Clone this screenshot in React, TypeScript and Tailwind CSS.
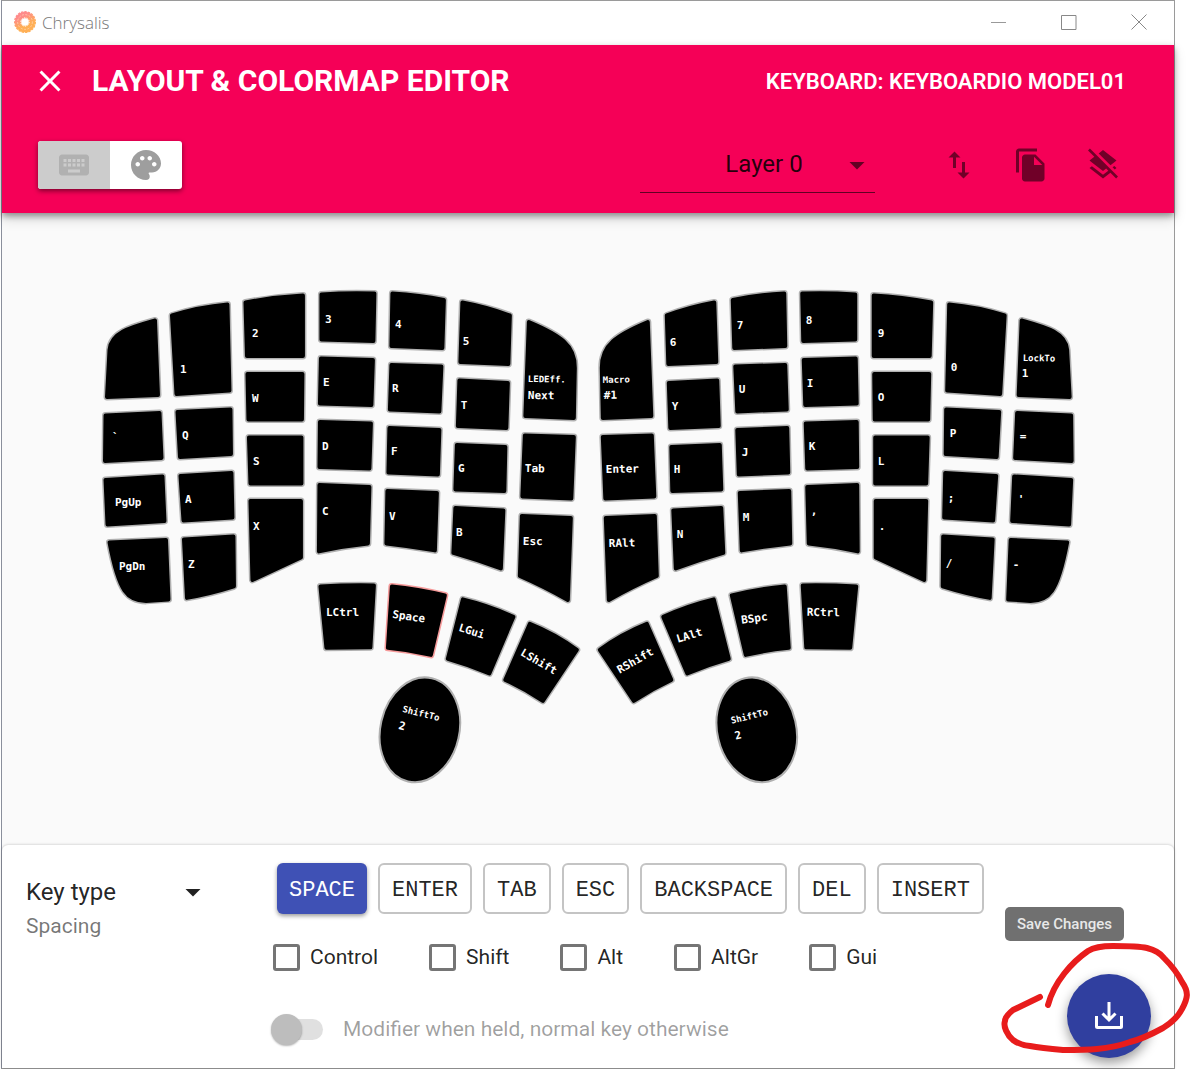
import React from "react";
import {
  MdArrowDropDown,
  MdClose,
  MdFileCopy,
  MdImportExport,
  MdKeyboard,
  MdLayersClear,
  MdPalette,
} from "react-icons/md";

type Legend = { text: string; x: number; y: number; turn?: number; small?: boolean };

/* Keycap outlines of the left half; the right half is their mirror image. */
const CAPS: string[] = [
  "M155 320.5L158 395L107 397L109.5 350C111 332 132 327 155 320.5Z",
  "M172 315.5Q199 307 227.5 304.5L229.5 390.5L176.5 394Z",
  "M245.5 302.5Q275 297 303 295.5V356H247Z",
  "M247.5 374H302.5L302 419.5H248.5Z",
  "M249 437.5H301.5V483.5H250.5Z",
  "M250.5 501H301V557.5L252.5 580Z",
  "M105.5 415.5L159.5 413L161.5 458L105 461Z",
  "M105.5 480L162.5 476.5L164.5 521L107.5 524.5Z",
  "M109.5 542.5L166 540L168.5 599.5L146 601C128 601 119 593 109.5 542.5Z",
  "M177.5 412L230.5 409.5L231 454L180 457Z",
  "M180.5 476L231.5 473L232.5 517.5L183.5 520.5Z",
  "M184 539.5L233.5 536.5L234 586.5Q210 594 187 598Z",
  "M321.5 294.5Q348 292.5 374.5 293.5L373.5 341L321.5 339.5Z",
  "M321 358.5L373 360L371.5 405L320 403.5Z",
  "M320 422L371 423.5L369.5 468.5L319.5 467Z",
  "M319.5 485L369.5 487L368 543.5Q343 546 319 551.5Z",
  "M392.5 293.5Q420 295 444 300L442.5 348L391.5 346Z",
  "M391.5 365L441.5 366.5L439.5 411.5L390 409.5Z",
  "M389.5 428L439.5 430L438 474.5L388.5 472.5Z",
  "M387.5 491L437 493L435 550.5Q410 546 386.5 543.5Z",
  "M462.5 302.5Q487 307 510 315.5L508.5 364L460.5 362Z",
  "M459.5 380.5L508 383L506.5 428L458 426Z",
  "M457 445L505.5 447L504.5 491L455.5 489.5Z",
  "M455.5 508L503.5 510.5L501 568.5Q478 560 453.5 553Z",
  "M529 322C560 335 575.5 345 575 368L574 418L525.5 416Z",
  "M525 435.5L574 437L571.5 498.5L522.5 496.5Z",
  "M522 516L571 518L568 600Q543 586 520 576Z",
  "M320.5 586.5Q348 585 374 585.5L370.5 647.5L326.5 648Z",
  "M463 599.5Q490 606 513.5 617L489.5 673.5Q469 665 448 659Z",
  "M530 624Q555 634 577 650L543 701Q525 689 505.5 680Z",
];

const THUMB_CAP = "M392 586.5Q418 589 445 595.5L431 655Q410 650 388 648Z";

const LEGENDS: Legend[] = [
  { text: "1", x: 180, y: 373 },
  { text: "2", x: 252, y: 337 },
  { text: "W", x: 252, y: 402 },
  { text: "S", x: 253, y: 465 },
  { text: "X", x: 253, y: 530 },
  { text: "`", x: 112, y: 441 },
  { text: "Q", x: 182, y: 439 },
  { text: "A", x: 185, y: 503 },
  { text: "Z", x: 188, y: 568 },
  { text: "PgUp", x: 115, y: 506 },
  { text: "PgDn", x: 119, y: 570 },
  { text: "3", x: 325, y: 323 },
  { text: "4", x: 395, y: 328 },
  { text: "5", x: 463, y: 345 },
  { text: "E", x: 323, y: 386 },
  { text: "R", x: 392, y: 392 },
  { text: "T", x: 461, y: 409 },
  { text: "D", x: 322, y: 450 },
  { text: "F", x: 391, y: 455 },
  { text: "G", x: 458, y: 472 },
  { text: "C", x: 322, y: 515 },
  { text: "V", x: 389, y: 520 },
  { text: "B", x: 456, y: 536 },
  { text: "LEDEff.", x: 528, y: 382, turn: 1, small: true },
  { text: "Next", x: 528, y: 399, turn: 1 },
  { text: "Tab", x: 525, y: 472, turn: 1 },
  { text: "Esc", x: 523, y: 545, turn: 1 },
  { text: "Macro", x: 603, y: 383, turn: -1, small: true },
  { text: "#1", x: 604, y: 399, turn: -1 },
  { text: "Enter", x: 606, y: 473, turn: -1 },
  { text: "RAlt", x: 609, y: 547, turn: -1 },
  { text: "6", x: 670, y: 346 },
  { text: "Y", x: 672, y: 410 },
  { text: "H", x: 674, y: 473 },
  { text: "N", x: 677, y: 538 },
  { text: "7", x: 737, y: 329 },
  { text: "U", x: 739, y: 393 },
  { text: "J", x: 742, y: 456 },
  { text: "M", x: 743, y: 521 },
  { text: "8", x: 806, y: 324 },
  { text: "I", x: 807, y: 387 },
  { text: "K", x: 809, y: 450 },
  { text: ",", x: 811, y: 515 },
  { text: "9", x: 878, y: 337 },
  { text: "O", x: 878, y: 401 },
  { text: "L", x: 878, y: 465 },
  { text: ".", x: 879, y: 530 },
  { text: "0", x: 951, y: 371 },
  { text: "P", x: 950, y: 437 },
  { text: ";", x: 948, y: 502 },
  { text: "/", x: 946, y: 567 },
  { text: "LockTo", x: 1023, y: 361, turn: 1, small: true },
  { text: "1", x: 1022, y: 377 },
  { text: "=", x: 1020, y: 440 },
  { text: "'", x: 1018, y: 503 },
  { text: "-", x: 1013, y: 568 },
  { text: "LCtrl", x: 326, y: 616 },
  { text: "Space", x: 392, y: 618, turn: 8 },
  { text: "LGui", x: 458, y: 631, turn: 17 },
  { text: "LShift", x: 520, y: 655, turn: 30 },
  { text: "ShiftTo", x: 402, y: 712, turn: 14, small: true },
  { text: "2", x: 398, y: 729, turn: 14 },
  { text: "RShift", x: 620, y: 674, turn: -30 },
  { text: "LAlt", x: 678, y: 643, turn: -17 },
  { text: "BSpc", x: 742, y: 624, turn: -8 },
  { text: "RCtrl", x: 807, y: 616, turn: 1 },
  { text: "ShiftTo", x: 732, y: 724, turn: -14, small: true },
  { text: "2", x: 736, y: 740, turn: -14 },
];

function Cap({ d, selected = false }: { d: string; selected?: boolean }) {
  return (
    <g strokeLinejoin="round">
      <path d={d} fill="none" stroke={selected ? "#f59a9a" : "#b0b0b0"} strokeWidth={7} />
      <path d={d} fill="#000" stroke="#000" strokeWidth={4} />
    </g>
  );
}

function Half({ selected = false }: { selected?: boolean }) {
  return (
    <>
      {CAPS.map((d) => (
        <Cap key={d} d={d} />
      ))}
      <Cap d={THUMB_CAP} selected={selected} />
      <ellipse
        cx={420}
        cy={730}
        rx={39.5}
        ry={53}
        transform="rotate(13 420 730)"
        fill="#000"
        stroke="#b0b0b0"
        strokeWidth={2}
      />
    </>
  );
}

function Keyboard() {
  return (
    <svg viewBox="100 286 977 500" className="w-10/12" role="img" aria-label="Keyboard layout">
      <Half selected />
      <g transform="translate(1177 0) scale(-1 1)">
        <Half />
      </g>
      <g className="fill-white font-['DejaVu_Sans_Mono',monospace] font-bold">
        {LEGENDS.map((l, i) => (
          <text
            key={i}
            x={l.x}
            y={l.y}
            className={l.small ? "text-[9px]" : "text-[11px]"}
            transform={l.turn ? `rotate(${l.turn} ${l.x} ${l.y})` : undefined}
          >
            {l.text}
          </text>
        ))}
      </g>
    </svg>
  );
}

function Logo() {
  return (
    <svg viewBox="0 0 24 24" className="size-6" aria-hidden="true">
      <defs>
        <linearGradient id="ring" x1="0" y1="0" x2="0.5" y2="1">
          <stop offset="0.2" stopColor="#ff8a8a" />
          <stop offset="0.8" stopColor="#ffb056" />
        </linearGradient>
      </defs>
      <circle cx="12" cy="12" r="7" fill="none" stroke="url(#ring)" strokeWidth="6.5" />
      <circle cx="12" cy="12" r="10.3" fill="none" stroke="url(#ring)" strokeWidth="1.4" strokeDasharray="2.4 1" />
      <circle cx="12" cy="12" r="7.4" fill="none" stroke="#ffd0b0" strokeWidth="0.8" strokeDasharray="2 1.5" />
      <circle cx="12" cy="12" r="4.2" fill="none" stroke="#fff" strokeWidth="1" strokeDasharray="1.4 1.2" />
    </svg>
  );
}

function TitleBar() {
  return (
    <div className="flex h-11 items-center justify-between bg-white pb-0.5 pl-[11px]">
      <div className="flex items-center gap-[5px]">
        <Logo />
        <span className="pt-0.5 font-['Open_Sans','Noto_Sans',sans-serif] text-[17px] leading-6 font-light text-[#777]">
          Chrysalis
        </span>
      </div>
      <div className="flex">
        <button aria-label="Minimize" className="flex h-10 w-[70px] items-center justify-center">
          <svg viewBox="0 0 16 16" className="size-4" stroke="#999" fill="none">
            <path d="M0 8.500H15" />
          </svg>
        </button>
        <button aria-label="Maximize" className="flex h-10 w-[70px] items-center justify-center">
          <svg viewBox="0 0 16 16" className="size-4" stroke="#888" fill="none">
            <path d="M.5 1.500H15V15.500H.5Z" />
          </svg>
        </button>
        <button aria-label="Close window" className="flex h-10 w-[70px] items-center justify-center">
          <svg viewBox="0 0 16 16" className="size-4" stroke="#888" fill="none">
            <path d="M.5 .5L15.500 15.500M15.500 .5L.5 15.500" />
          </svg>
        </button>
      </div>
    </div>
  );
}

function Header() {
  return (
    <header className="relative bg-[#f50057] shadow-[0_3px_6px_rgba(0,0,0,0.35),0_6px_12px_rgba(0,0,0,0.15)]">
      <div className="flex h-18 items-center justify-between pr-12 pl-[30px] text-white">
        <div className="flex items-center gap-6">
          <button aria-label="Close editor">
            <MdClose className="size-9" />
          </button>
          <h1 className="text-[30px] leading-9 font-bold">LAYOUT &amp; COLORMAP EDITOR</h1>
        </div>
        <span className="text-[22px] font-semibold">KEYBOARD: KEYBOARDIO MODEL01</span>
      </div>
      <div className="flex h-24 items-center justify-between pr-[35px] pl-9">
        <div className="flex overflow-hidden rounded-[3px] bg-white shadow-[0_2px_5px_rgba(0,0,0,0.5)]">
          <button aria-label="Edit layout" className="flex h-12 w-18 items-center justify-center bg-[#cccccc] text-[#b1b1b1]">
            <MdKeyboard className="size-9" />
          </button>
          <button aria-label="Edit colormap" className="flex h-12 w-18 items-center justify-center text-[#9e9e9e]">
            <MdPalette className="size-9" />
          </button>
        </div>
        <div className="flex items-center">
          <div className="relative mr-12 w-[235px]">
            <select
              aria-label="Layer"
              className="h-14 w-full appearance-none border-b border-black/60 pb-0.5 pl-[13px] text-center text-2xl text-black/87 [text-align-last:center]"
            >
              <option>Layer 0</option>
            </select>
            <MdArrowDropDown className="pointer-events-none absolute top-2.5 right-0 size-9 text-black/60" />
          </div>
          <button aria-label="Import or export" className="flex size-18 items-center justify-center text-black/54">
            <MdImportExport className="size-9" />
          </button>
          <button aria-label="Copy layer" className="flex size-18 items-center justify-center text-black/54">
            <MdFileCopy className="size-9" />
          </button>
          <button aria-label="Clear layer" className="flex size-18 items-center justify-center text-black/54">
            <MdLayersClear className="size-9" />
          </button>
        </div>
      </div>
    </header>
  );
}

const KEYS = ["ENTER", "TAB", "ESC", "BACKSPACE", "DEL", "INSERT"];
const MODIFIERS = ["Control", "Shift", "Alt", "AltGr", "Gui"];

function KeyPanel() {
  return (
    <section className="relative flex rounded-t-md bg-white px-6 pt-[18px] pb-[21px] shadow-[0_0_3px_rgba(0,0,0,0.25)]">
      <button aria-haspopup="menu" className="mt-[11px] flex w-[185px] items-start justify-between self-start text-left">
        <span className="flex flex-col">
          <span className="text-2xl leading-9 text-black/87">Key type</span>
          <span className="text-[21px] leading-8 text-black/54">Spacing</span>
        </span>
        <MdArrowDropDown className="size-9 text-black/87" />
      </button>
      <div className="ml-[62px] flex flex-col">
        <div className="ml-1 flex gap-[11px] font-['Liberation_Mono',monospace] text-[22px]">
          <button className="h-[51px] rounded-md bg-[#3f51b5] px-3 pt-1 text-white shadow-[0_2px_4px_rgba(0,0,0,0.4)]">
            SPACE
          </button>
          {KEYS.map((k) => (
            <button key={k} className="h-[51px] rounded-md border-2 border-[#c4c4c4] px-3 pt-1 text-black/87">
              {k}
            </button>
          ))}
        </div>
        <div className="mt-[25px] flex gap-[51px]">
          {MODIFIERS.map((m) => (
            <label key={m} className="flex items-center gap-2.5 text-[21px] leading-9 text-black/87">
              <input type="checkbox" className="size-[27px] appearance-none rounded-[3px] border-3 border-[#757575]" />
              {m}
            </label>
          ))}
        </div>
        <label className="mt-9 flex items-center gap-5 text-[21px] leading-9 text-black/38">
          <input
            type="checkbox"
            role="switch"
            disabled
            className="relative ml-2 h-[21px] w-[42px] appearance-none rounded-full bg-[#e0e0e0] before:absolute before:-top-[5px] before:-left-2.5 before:size-[31px] before:rounded-full before:bg-[#bdbdbd] before:shadow-[0_1px_2px_rgba(0,0,0,0.3)]"
          />
          Modifier when held, normal key otherwise
        </label>
      </div>
    </section>
  );
}

function SaveAction() {
  return (
    <div className="absolute right-0 bottom-0 h-[169px] w-[191px]">
      <div
        role="tooltip"
        className="absolute top-[7px] right-[67px] rounded-[5px] bg-[#707070] px-3 py-[5px] text-[15px] leading-6 font-medium whitespace-nowrap text-[#e8e8e8]"
      >
        Save Changes
      </div>
      <button
        aria-label="Save Changes"
        className="absolute right-10 bottom-[11px] flex size-21 items-center justify-center rounded-full bg-[#303f9f] shadow-[0_5px_12px_rgba(0,0,0,0.4)]"
      >
        <svg viewBox="0 0 28 28" className="size-7" fill="none" stroke="#fff" strokeWidth="3">
          <path d="M14 0V18M7.500 11.500L14 18L20.500 11.500M1.500 14V24.500Q1.500 25.500 2.500 25.500H25.500Q26.500 25.500 26.500 24.500V14" />
        </svg>
      </button>
      <svg
        viewBox="0 0 191 169"
        className="pointer-events-none absolute inset-0"
        fill="none"
        stroke="#e81c1c"
        strokeWidth="6"
        strokeLinecap="round"
        strokeLinejoin="round"
        aria-hidden="true"
      >
        <path d="M48 105C54 82 72 62 88 51C96 46 106 46 113 46C126 46 138 46 147 48C155 50 161 54 164 58C172 66 178 74 182 82C189 92 188 98 182 109C178 117 171 123 163 128C152 134 142 139 130 142C119 146 108 148 97 149C86 150 74 150 63 150C51 149 40 148 30 146C22 145 17 143 13 140C7 135 3 126 5 121C5 117 8 114 13 110L40 97" />
      </svg>
    </div>
  );
}

export default function App() {
  return (
    <div className="relative flex min-h-screen bg-white pr-4 pl-px font-['Roboto',sans-serif]">
      <div className="flex grow flex-col border border-[#9a9a9a] border-l-[#8a8f9c] bg-[#fafafa]">
        <TitleBar />
        <Header />
        <main className="flex grow items-start justify-center pt-[73px] pb-14">
          <Keyboard />
        </main>
        <KeyPanel />
      </div>
      <SaveAction />
    </div>
  );
}
